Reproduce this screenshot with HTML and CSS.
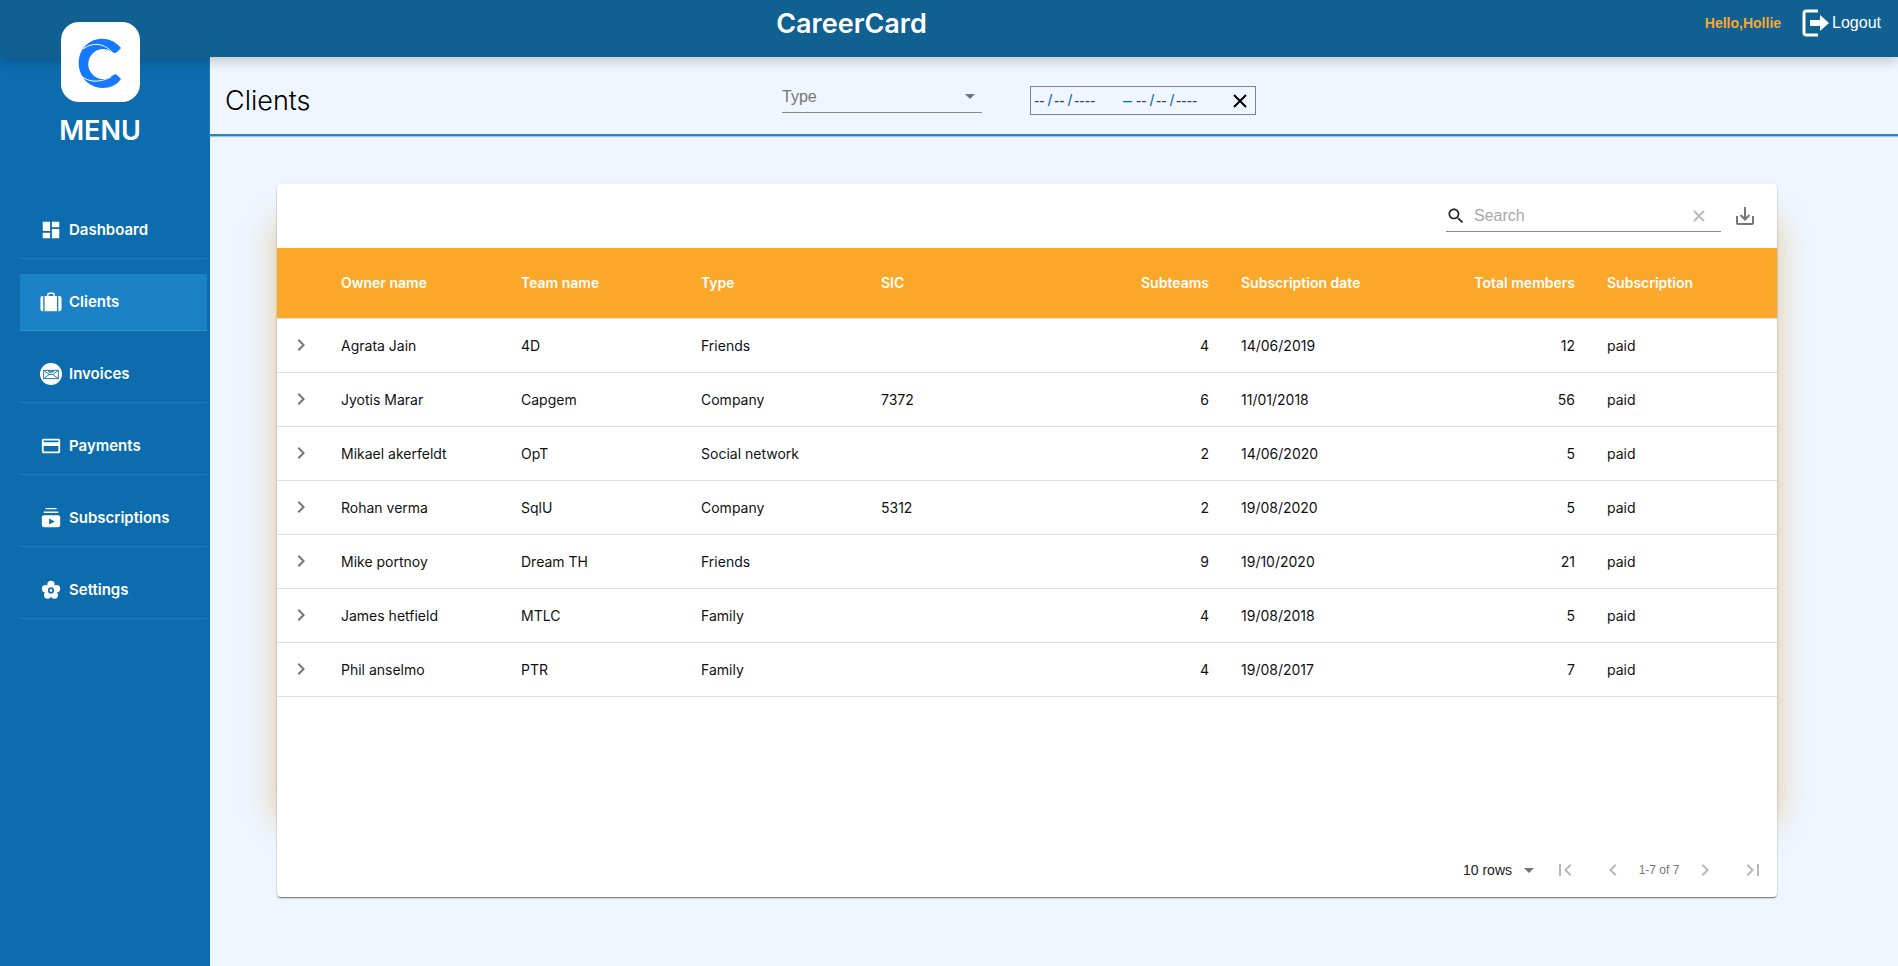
FILE: index.html
```html
<!DOCTYPE html>
<html lang="en">
<head>
<meta charset="utf-8">
<title>CareerCard – Clients</title>
<link rel="stylesheet" href="styles.css">
</head>
<body>
<div class="app">
  <header class="topbar">
    <div class="brand">CareerCard</div>
    <div class="user">
      <span class="hello">Hello,Hollie</span>
      <button class="logout" type="button">
        <svg width="28" height="28" viewBox="0 0 28 28" aria-hidden="true"><path d="M16 2H4.500Q2 2 2 4.500V23.500Q2 26 4.500 26H16" fill="none" stroke="#fff" stroke-width="3"/><path d="M8 11h10V6l9 8-9 8v-5H8z" fill="#fff"/></svg>Logout</button>
    </div>
  </header>
  <div class="body">
    <aside class="sidebar">
      <div class="logo">
        <svg width="79" height="80" viewBox="0 0 79 80" aria-hidden="true"><rect width="79" height="80" rx="18" fill="#fff"/><path d="M60 26C49 13 30 14 21 28C12 44 22 66 42 66C49 66 56 63 60 57L56 53Q54 51 51 54C43 60 32 57 28 47C25 36 33 27 42 27Q47 27 51 30Q54 32 56 30Z" fill="#1479ff"/><path d="M22 27C33 19 44 22 52 31M18 52C28 62 40 60 50 55" fill="none" stroke="#fff" stroke-width="1"/></svg>
      </div>
      <div class="menu-title">MENU</div>
      <nav class="nav" aria-label="Main">
        <a class="nav-item" href="#dashboard"><svg class="nav-icon" viewBox="0 0 24 24"><path d="M3 13h8V3H3v10zm0 8h8v-6H3v6zm10 0h8V11h-8v10zm0-18v6h8V3h-8z"/></svg><span>Dashboard</span></a>
        <a class="nav-item active" href="#clients" aria-current="page"><svg class="nav-icon" viewBox="0 0 24 24"><path d="M5 5.500H18.500V22H5zM3.500 5.500V22H2.500Q.5 22 .5 20V7.500Q.5 5.500 2.500 5.500zM20 5.500h1.500Q23.500 5.500 23.500 7.500V20Q23.500 22 21.500 22H20z"/><path d="M8.500 6V4.500Q8.500 2.500 10.500 2.500H13.500Q15.500 2.500 15.500 4.500V6" fill="none" stroke="#fff" stroke-width="1.500"/></svg><span>Clients</span></a>
        <a class="nav-item" href="#invoices"><svg class="nav-icon" viewBox="0 0 24 24"><circle cx="12" cy="12" r="12"/><path d="M4 8h16v9H4zM4 8l6 4.500h4L20 8M4 17l6-4.500M20 17l-6-4.500M9 9h6l-3 2z" fill="none" stroke="#0c6cae" stroke-width="1"/></svg><span>Invoices</span></a>
        <a class="nav-item" href="#payments"><svg class="nav-icon" viewBox="0 0 24 24"><path d="M20 4H4c-1.100 0-2 .9-2 2v12c0 1.100.9 2 2 2h16c1.100 0 2-.9 2-2V6c0-1.100-.9-2-2-2zm0 14H4v-6h16v6zm0-10H4V6h16v2z"/></svg><span>Payments</span></a>
        <a class="nav-item" href="#subscriptions"><svg class="nav-icon" viewBox="0 0 24 24"><path d="M6 1h12v1.500H6zM4 5h16v1.500H4zM4 9h16q2 0 2 2v9q0 2-2 2H4q-2 0-2-2v-9q0-2 2-2zm6 3.500v6.500l6-3.200z" fill-rule="evenodd"/></svg><span>Subscriptions</span></a>
        <a class="nav-item" href="#settings"><svg class="nav-icon" viewBox="0 0 24 24"><circle cx="12" cy="6" r="4"/><circle cx="18" cy="10.500" r="4"/><circle cx="15.700" cy="17.500" r="4"/><circle cx="8.300" cy="17.500" r="4"/><circle cx="6" cy="10.500" r="4"/><circle cx="12" cy="12.500" r="6"/><circle cx="12" cy="12.500" r="2.500" fill="none" stroke="#0c6cae" stroke-width="1.800"/></svg><span>Settings</span></a>
      </nav>
    </aside>
    <main class="main">
      <div class="pagehead">
        <h1 class="title">Clients</h1>
        <div class="filter">
          <select class="filter-select" aria-label="Type"><option>Type</option></select>
          <svg class="caret" viewBox="0 0 10 5" aria-hidden="true"><path d="M0 0h10L5 5z"/></svg>
        </div>
        <div class="dates" role="group" aria-label="Date range">
          <input class="d2" aria-label="From day" placeholder="--"><span>/</span><input class="d2" aria-label="From month" placeholder="--"><span>/</span><input class="d4" aria-label="From year" placeholder="----">
          <span class="dash">–</span>
          <input class="d2" aria-label="To day" placeholder="--"><span>/</span><input class="d2" aria-label="To month" placeholder="--"><span>/</span><input class="d4" aria-label="To year" placeholder="----">
          <button class="clear" type="button" aria-label="Clear dates"><svg width="14" height="14" viewBox="0 0 14 14"><path d="M1 1l12 12M13 1L1 13" stroke="#000" stroke-width="2"/></svg></button>
        </div>
      </div>
      <div class="content">
        <section class="card">
          <div class="toolbar">
            <div class="search">
              <svg class="search-icon" viewBox="0 0 24 24" aria-hidden="true"><path d="M15.500 14h-.79l-.28-.27C15.410 12.590 16 11.110 16 9.500 16 5.910 13.090 3 9.500 3S3 5.910 3 9.500 5.910 16 9.500 16c1.610 0 3.090-.59 4.230-1.570l.27.28v.79l5 4.990L20.490 19l-4.990-5zm-6 0C7.010 14 5 11.990 5 9.500S7.010 5 9.500 5 14 7.010 14 9.500 11.990 14 9.500 14z"/></svg>
              <input class="search-input" type="text" placeholder="Search" aria-label="Search">
              <button class="icon-btn" type="button" aria-label="Clear search"><svg width="12" height="12" viewBox="0 0 12 12"><path d="M1 1l10 10M11 1L1 11" stroke="#bbb" stroke-width="2"/></svg></button>
            </div>
            <button class="icon-btn" type="button" aria-label="Export"><svg width="18" height="18" viewBox="0 0 18 18"><path d="M1 9v7q0 1 1 1h14q1 0 1-1V9M9 0v12M4.500 8L9 12.500 13.500 8" fill="none" stroke="#757575" stroke-width="2"/></svg></button>
          </div>
          <table class="table">
            <colgroup><col class="c-exp"><col class="c-a"><col class="c-a"><col class="c-a"><col class="c-b"><col class="c-b"><col class="c-c"><col class="c-c"><col></colgroup>
            <thead><tr><th></th><th>Owner name</th><th>Team name</th><th>Type</th><th>SIC</th><th class="num">Subteams</th><th>Subscription date</th><th class="num">Total members</th><th>Subscription</th></tr></thead>
            <tbody id="rows"></tbody>
          </table>
          <footer class="pager">
            <div class="rows">
              <select class="rows-select" aria-label="Rows per page"><option>10 rows</option></select>
              <svg class="caret" viewBox="0 0 10 5" aria-hidden="true"><path d="M0 0h10L5 5z"/></svg>
            </div>
            <button class="page-btn" type="button" aria-label="First page"><svg viewBox="0 0 24 24"><path d="M18.410 16.590L13.820 12l4.590-4.590L17 6l-6 6 6 6zM6 6h2v12H6z"/></svg></button>
            <button class="page-btn" type="button" aria-label="Previous page"><svg viewBox="0 0 24 24"><path d="M15.410 7.410L14 6l-6 6 6 6 1.410-1.410L10.830 12z"/></svg></button>
            <span class="range">1-7 of 7</span>
            <button class="page-btn" type="button" aria-label="Next page"><svg viewBox="0 0 24 24"><path d="M10 6L8.590 7.410 13.170 12l-4.580 4.590L10 18l6-6z"/></svg></button>
            <button class="page-btn" type="button" aria-label="Last page"><svg viewBox="0 0 24 24"><path d="M5.590 7.410L10.180 12l-4.590 4.590L7 18l6-6-6-6zM16 6h2v12h-2z"/></svg></button>
          </footer>
        </section>
      </div>
    </main>
  </div>
</div>
<script src="app.js"></script>
</body>
</html>
```
FILE: styles.css
```css
* { box-sizing: border-box; }
body { margin: 0; font-family: Inter, "Noto Sans", sans-serif; font-size: 14px; color: #111; background: #eff6ff; }
button, input, select { font: inherit; border: 0; background: none; padding: 0; margin: 0; outline: 0; }
button { cursor: pointer; display: flex; align-items: center; justify-content: center; }
.app { min-height: 100vh; display: flex; flex-direction: column; }

.topbar { height: 57px; background: #106092; box-shadow: 0 4px 12px rgba(0, 0, 0, .2); display: grid; grid-template-columns: 1fr auto 1fr; align-items: start; padding: 0 17px 0 0; position: relative; z-index: 1; }
.brand { grid-column: 2; margin-right: 178px; padding-top: 8px; font-size: 27px; line-height: 32px; font-weight: 600; color: #fff; }
.user { grid-column: 3; justify-self: end; display: flex; align-items: center; gap: 21px; height: 45px; font-family: "Liberation Sans", Arial, sans-serif; font-size: 16px; }
.hello { color: #fba72a; font-weight: 700; font-size: 14px; }
.logout { color: #fff; font-size: 16px; gap: 2px; }

.body { flex: 1; display: flex; }
.sidebar { width: 210px; flex: none; background: #0c6cae; color: #fff; }
.logo { position: relative; z-index: 2; height: 80px; margin: -35px 0 0 61px; }
.logo svg { display: block; }
.menu-title { text-align: center; padding-right: 10px; margin-top: 13px; font-size: 27px; line-height: 32px; font-weight: 600; }
.nav { margin: 55px 3px 0 20px; display: flex; flex-direction: column; gap: 15px; }
.nav-item { display: flex; align-items: center; gap: 7px; height: 57px; padding-left: 20px; color: #fff; text-decoration: none; font-weight: 600; font-size: 15px; border-bottom: 1px solid #2579b6; }
.nav-item span { padding-bottom: 2px; }
.nav-item.active { background: #1a82c5; border-color: #3290cd; }
.nav-icon { width: 22px; height: 22px; fill: #fff; }

.main { flex: 1; min-width: 0; display: flex; flex-direction: column; }
.pagehead { display: flex; align-items: flex-start; height: 79px; border-bottom: 2px solid #2b83bf; box-shadow: 0 1px 1px #9cc5e4; padding-left: 15px; }
.title { margin: 26px 0 0; width: 557px; font-size: 27px; line-height: 36px; font-weight: 300; color: #000; }
.filter { width: 200px; margin-top: 24px; height: 32px; border-bottom: 1px solid #85888d; display: flex; align-items: center; padding-right: 7px; }
.filter-select { flex: 1; appearance: none; font-family: "Liberation Sans", Arial, sans-serif; font-size: 16px; color: #757575; height: 30px; }
.caret { width: 10px; height: 5px; fill: #757575; flex: none; }
.dates { margin: 29px 0 0 48px; width: 226px; height: 29px; border: 1px solid #808080; display: flex; align-items: center; padding: 0 8px 0 3px; font-family: "Liberation Sans", Arial, sans-serif; font-size: 16px; color: #0c6cae; }
.dates span { width: 8px; text-align: center; }
.dates .dash { width: 13px; margin-left: 25px; text-align: left; }
.d2 { width: 12px; }
.d4 { width: 24px; }
.dates input::placeholder { color: #444; opacity: 1; }
.clear { margin-left: auto; }

.content { flex: 1; padding: 48px 121px 69px 67px; display: flex; position: relative; z-index: 0; }
.content::before { content: ""; position: absolute; z-index: -1; top: 86px; bottom: 146px; left: 67px; right: 121px; box-shadow: 0 0 30px rgba(215, 155, 50, .5); }
.card { flex: 1; min-width: 0; display: flex; flex-direction: column; border-radius: 4px; background: #fff; box-shadow: 0 2px 1px -1px rgba(0, 0, 0, .3), 0 1px 2px rgba(0, 0, 0, .35); }
.toolbar { height: 64px; display: flex; align-items: center; justify-content: flex-end; gap: 15px; padding: 0 23px 0 0; }
.search { width: 275px; height: 32px; border-bottom: 1px solid #8a8a8a; display: flex; align-items: center; padding-right: 16px; }
.search-icon { width: 20px; height: 20px; fill: #222; }
.search-input { flex: 1; min-width: 0; margin-left: 8px; font-family: "Liberation Sans", Arial, sans-serif; font-size: 16px; }
.search-input::placeholder { color: #a8a8a8; opacity: 1; }

.table { width: 100%; table-layout: fixed; border-collapse: collapse; font-size: 14px; }
.c-exp { width: 48px; }
.c-a { width: 12%; }
.c-b { width: 12%; }
.c-c { width: 12.2%; }
.table th, .table td { text-align: left; padding: 0 16px; border-bottom: 1px solid #e0e0e0; height: 54px; white-space: nowrap; }
.table th { height: 70px; background: #fba72a; color: #fff; font-weight: 600; }
.table td { font-weight: 400; }
.table .num { text-align: right; }
.table .exp { padding: 0 0 0 12px; }
.exp svg { width: 24px; height: 24px; fill: #757575; display: block; }

.pager { margin-top: auto; height: 54px; display: flex; align-items: center; justify-content: flex-end; }
.rows { display: flex; align-items: center; width: 71px; margin-right: 7px; }
.rows-select { flex: 1; appearance: none; font-family: "Liberation Sans", Arial, sans-serif; font-size: 14px; color: #222; }
.page-btn { width: 48px; height: 48px; }
.page-btn svg { width: 24px; height: 24px; fill: #b8b8b8; }
.range { width: 44px; text-align: center; white-space: nowrap; font-family: "Liberation Sans", Arial, sans-serif; font-size: 12px; color: #757575; }
```
FILE: app.js
```js
const clients = [
  ["Agrata Jain", "4D", "Friends", "", 4, "14/06/2019", 12, "paid"],
  ["Jyotis Marar", "Capgem", "Company", "7372", 6, "11/01/2018", 56, "paid"],
  ["Mikael akerfeldt", "OpT", "Social network", "", 2, "14/06/2020", 5, "paid"],
  ["Rohan verma", "SqlU", "Company", "5312", 2, "19/08/2020", 5, "paid"],
  ["Mike portnoy", "Dream TH", "Friends", "", 9, "19/10/2020", 21, "paid"],
  ["James hetfield", "MTLC", "Family", "", 4, "19/08/2018", 5, "paid"],
  ["Phil anselmo", "PTR", "Family", "", 4, "19/08/2017", 7, "paid"]
];
const chevron = '<button type="button" aria-label="Show details"><svg viewBox="0 0 24 24"><path d="M10 6L8.590 7.410 13.170 12l-4.580 4.590L10 18l6-6z"/></svg></button>';
document.getElementById("rows").innerHTML = clients.map(function (row) {
  return '<tr><td class="exp">' + chevron + "</td>" + row.map(function (value) {
    return typeof value === "number" ? '<td class="num">' + value + "</td>" : "<td>" + value + "</td>";
  }).join("") + "</tr>";
}).join("");
```
